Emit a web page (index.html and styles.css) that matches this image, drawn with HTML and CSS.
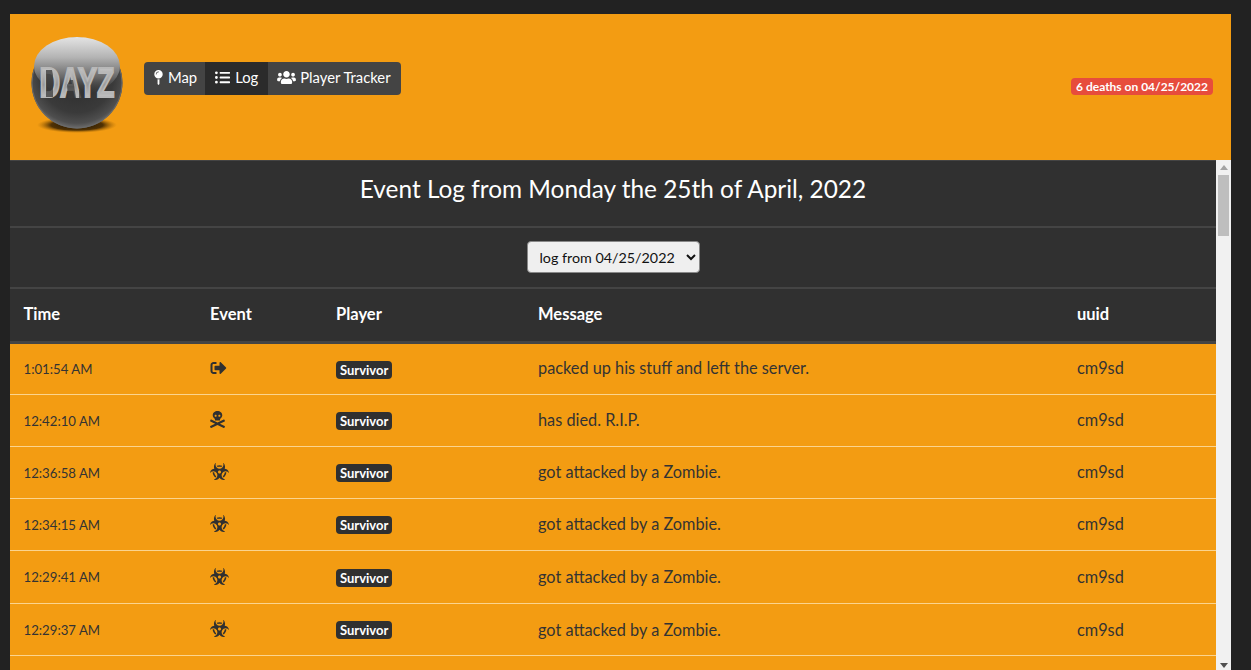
FILE: index.html
```html
<!DOCTYPE html>
<html lang="en">
<head>
<meta charset="utf-8">
<title>DayZ Event Log</title>
<link rel="stylesheet" href="styles.css">
</head>
<body>
<svg class="defs" width="0" height="0" aria-hidden="true">
  <symbol id="i-out" viewBox="0 0 512 512"><path d="M497 273L329 441c-15 15-41 4.500-41-17v-96H152c-13.300 0-24-10.700-24-24v-96c0-13.300 10.700-24 24-24h136V88c0-21.400 25.900-32 41-17l168 168c9.300 9.400 9.300 24.600 0 34zM192 436v-40c0-6.600-5.400-12-12-12H96c-17.700 0-32-14.300-32-32V160c0-17.700 14.300-32 32-32h84c6.600 0 12-5.400 12-12V76c0-6.600-5.400-12-12-12H96c-53 0-96 43-96 96v192c0 53 43 96 96 96h84c6.600 0 12-5.400 12-12z"/></symbol>
  <symbol id="i-skull" viewBox="0 0 448 512"><path d="M439.150 453.060L297.170 384l141.990-69.060c7.900-3.950 11.110-13.560 7.150-21.460L432 264.850c-3.950-7.900-13.560-11.110-21.470-7.160L224 348.410 37.470 257.690c-7.900-3.950-17.510-.75-21.470 7.160L1.690 293.480c-3.950 7.900-.75 17.510 7.150 21.460L150.830 384 8.850 453.060c-7.900 3.950-11.110 13.560-7.150 21.470l14.310 28.630c3.950 7.900 13.560 11.110 21.470 7.150L224 419.590l186.530 90.720c7.900 3.950 17.510.75 21.470-7.150l14.310-28.630c3.950-7.910.74-17.520-7.160-21.470zM150 237.280l-5.480 25.870c-2.670 12.620 5.420 24.850 16.450 24.850h126.080c11.030 0 19.120-12.230 16.450-24.850l-5.500-25.870c41.780-22.410 70-62.750 70-109.280C368 57.310 303.530 0 224 0S80 57.310 80 128c0 46.530 28.220 86.870 70 109.280zM280 112c17.650 0 32 14.350 32 32s-14.350 32-32 32-32-14.350-32-32 14.350-32 32-32zm-112 0c17.650 0 32 14.350 32 32s-14.350 32-32 32-32-14.350-32-32 14.350-32 32-32z"/></symbol>
  <symbol id="i-bio" viewBox="0 0 576 512"><path d="M287.900 112c18.600 0 36.200 3.800 52.800 9.600 13.300-10.300 23.600-24.300 29.500-40.700-25.200-10.900-53-17-82.200-17-29.100 0-56.900 6-82.100 16.900 5.900 16.400 16.200 30.400 29.500 40.700 16.500-5.700 34-9.500 52.500-9.500zM163.600 438.700c12-11.800 20.400-26.400 24.500-42.400-32.900-26.400-54.800-65.300-58.900-109.600-8.500-2.800-17.200-4.600-26.400-4.600-7.600 0-15.200 1-22.500 3.100 4.100 62.800 36.500 117.800 83.300 153.500zm224.200-42.600c4.100 16 12.500 30.700 24.500 42.500 46.800-35.600 79.200-90.600 83.400-153.500-7.300-2-14.900-3.100-22.500-3.100-9.200 0-18 1.900-26.400 4.600-4.200 44.200-26.100 83.100-59 109.500zm113.500-205c-17.600-10.400-36.300-16.600-55.300-19.900 6-17.700 10-36.400 10-56.200 0-41-14.500-80.800-41-112.200-2.500-3-6.600-3.700-10-1.800-3.300 1.900-4.800 6-3.600 9.700 4.500 13.800 6.600 26.300 6.600 38.500 0 67.800-53.800 122.900-120 122.900S168 117 168 49.200c0-12.100 2.200-24.700 6.600-38.500 1.200-3.700-.3-7.800-3.600-9.700-3.400-1.900-7.500-1.200-10 1.800C134.600 34.200 120 74 120 115c0 19.800 3.900 38.500 10 56.200-18.900 3.300-37.700 9.500-55.300 19.900-34.600 20.500-61 53.300-74.300 92.400-1.300 3.700.2 7.700 3.500 9.800 3.300 2 7.500 1.300 10-1.600 9.400-10.800 19-19.100 29.200-25.100 57.300-33.900 130.800-13.700 163.900 45 33.100 58.700 13.400 134-43.900 167.900-10.200 6.100-22 10.400-35.800 13.400-3.700.8-6.400 4.200-6.400 8.100.1 4 2.700 7.300 6.500 8 39.700 7.800 80.600.8 115.200-19.700 18-10.600 32.900-24.500 45.300-40.100 12.400 15.600 27.300 29.500 45.300 40.100 34.600 20.500 75.500 27.500 115.200 19.700 3.800-.7 6.400-4 6.500-8 0-3.900-2.600-7.300-6.400-8.100-13.900-2.900-25.600-7.300-35.800-13.400-57.300-33.900-77-109.200-43.900-167.900s106.600-78.900 163.900-45c10.200 6.100 19.800 14.300 29.200 25.100 2.500 2.900 6.700 3.600 10 1.600s4.800-6.100 3.500-9.800c-13.100-39.100-39.500-72-74.100-92.400zm-213.400 129.300c-26.500 0-48-21.500-48-48s21.500-48 48-48 48 21.500 48 48-21.500 48-48 48z"/></symbol>
</svg>

<header class="topbar">
  <svg class="logo" viewBox="0 0 110 110" role="img" aria-label="DayZ logo">
    <defs>
      <radialGradient id="ball" cx="50%" cy="42%" r="58%">
        <stop offset="0" stop-color="#2a2a2a"/>
        <stop offset=".7" stop-color="#3a3a3a"/>
        <stop offset=".9" stop-color="#4e4e4e"/>
        <stop offset="1" stop-color="#6e6e6e"/>
      </radialGradient>
      <linearGradient id="shine" x1="0" y1="0" x2="0" y2="1">
        <stop offset="0" stop-color="#e4e4e4"/>
        <stop offset=".35" stop-color="#b4b4b4"/>
        <stop offset=".7" stop-color="#666"/>
        <stop offset="1" stop-color="#3a3a3a" stop-opacity="0"/>
      </linearGradient>
      <radialGradient id="drop" cx="50%" cy="50%" r="50%">
        <stop offset="0" stop-color="#1c1000"/>
        <stop offset=".65" stop-color="#3e2602" stop-opacity=".9"/>
        <stop offset="1" stop-color="#a86a08" stop-opacity="0"/>
      </radialGradient>
      <linearGradient id="ink" x1="0" y1="0" x2="0" y2="1">
        <stop offset="0" stop-color="#d8d8d8"/>
        <stop offset=".55" stop-color="#9a9a9a"/>
        <stop offset="1" stop-color="#dedede"/>
      </linearGradient>
    </defs>
    <ellipse cx="55" cy="95" rx="40" ry="8" fill="url(#drop)"/>
    <circle cx="55" cy="53" r="45.500" fill="url(#ball)"/>
    <circle cx="55" cy="53" r="45" fill="none" stroke="#6a6a6a" stroke-width="1"/>
    <ellipse cx="55" cy="36" rx="43" ry="29" fill="url(#shine)"/>
    <text class="logo-text" x="55" y="67" textLength="75" lengthAdjust="spacingAndGlyphs" fill="url(#ink)" stroke="#b8b8b8" stroke-width="2.200">DAYZ</text>
    <path class="logo-figures" d="M24 40h6l1 5v22h-7zM48 50h3l1 5 2 13h-8l-1-13zM57 60h2l1 8h-3z"/>
  </svg>
  <nav class="btn-group">
    <a class="btn">
      <svg class="ico" viewBox="0 0 288 512"><path d="M112 316.940v156.690l22.020 33.020c4.750 7.120 15.220 7.120 19.970 0L176 473.630V316.940c-10.390 1.920-21.060 3.060-32 3.060s-21.610-1.140-32-3.060zM144 0C64.470 0 0 64.470 0 144s64.470 144 144 144 144-64.470 144-144S223.530 0 144 0zm0 76c-37.500 0-68 30.500-68 68 0 6.620-5.380 12-12 12s-12-5.380-12-12c0-50.730 41.280-92 92-92 6.620 0 12 5.380 12 12s-5.380 12-12 12z"/></svg>
      Map
    </a>
    <a class="btn btn-active">
      <svg class="ico" viewBox="0 0 512 512"><path d="M48 48a48 48 0 1 0 48 48 48 48 0 0 0-48-48zm0 160a48 48 0 1 0 48 48 48 48 0 0 0-48-48zm0 160a48 48 0 1 0 48 48 48 48 0 0 0-48-48zm448 16H176a16 16 0 0 0-16 16v32a16 16 0 0 0 16 16h320a16 16 0 0 0 16-16v-32a16 16 0 0 0-16-16zm0-320H176a16 16 0 0 0-16 16v32a16 16 0 0 0 16 16h320a16 16 0 0 0 16-16V80a16 16 0 0 0-16-16zm0 160H176a16 16 0 0 0-16 16v32a16 16 0 0 0 16 16h320a16 16 0 0 0 16-16v-32a16 16 0 0 0-16-16z"/></svg>
      Log
    </a>
    <a class="btn">
      <svg class="ico" viewBox="0 0 640 512"><path d="M96 224c35.300 0 64-28.700 64-64s-28.700-64-64-64-64 28.700-64 64 28.700 64 64 64zm448 0c35.300 0 64-28.700 64-64s-28.700-64-64-64-64 28.700-64 64 28.700 64 64 64zm32 32h-64c-17.600 0-33.500 7.100-45.100 18.600 40.300 22.100 68.900 62 75.100 109.400h66c17.700 0 32-14.300 32-32v-32c0-35.300-28.700-64-64-64zm-256 0c61.900 0 112-50.100 112-112S381.900 32 320 32 208 82.100 208 144s50.100 112 112 112zm76.800 32h-8.300c-20.800 10-43.900 16-68.500 16s-47.600-6-68.500-16h-8.300C179.600 288 128 339.600 128 403.200V432c0 26.500 21.500 48 48 48h288c26.500 0 48-21.500 48-48v-28.800c0-63.600-51.600-115.200-115.200-115.200zm-223.700-13.400C161.500 263.100 145.600 256 128 256H64c-35.300 0-64 28.700-64 64v32c0 17.700 14.300 32 32 32h65.900c6.300-47.400 34.900-87.300 75.200-109.400z"/></svg>
      Player Tracker
    </a>
  </nav>
  <span class="deaths">6 deaths on 04/25/2022</span>
</header>

<div class="scroller">
  <main class="panel">
    <h1 class="title">Event Log from Monday the 25th of April, 2022</h1>
    <div class="picker">
      <select class="log-select">
        <option>log from 04/25/2022</option>
      </select>
    </div>
    <table class="log">
      <colgroup>
        <col class="c-time"><col class="c-event"><col class="c-player"><col class="c-msg"><col class="c-uuid">
      </colgroup>
      <thead>
        <tr><th>Time</th><th>Event</th><th>Player</th><th>Message</th><th>uuid</th></tr>
      </thead>
      <tbody>
        <tr><td class="time">1:01:54 AM</td><td><svg class="ev ev-out"><use href="#i-out"/></svg></td><td><span class="tag">Survivor</span></td><td class="txt">packed up his stuff and left the server.</td><td class="txt">cm9sd</td></tr>
        <tr><td class="time">12:42:10 AM</td><td><svg class="ev ev-skull"><use href="#i-skull"/></svg></td><td><span class="tag">Survivor</span></td><td class="txt">has died. R.I.P.</td><td class="txt">cm9sd</td></tr>
        <tr><td class="time">12:36:58 AM</td><td><svg class="ev ev-bio"><use href="#i-bio"/></svg></td><td><span class="tag">Survivor</span></td><td class="txt">got attacked by a Zombie.</td><td class="txt">cm9sd</td></tr>
        <tr><td class="time">12:34:15 AM</td><td><svg class="ev ev-bio"><use href="#i-bio"/></svg></td><td><span class="tag">Survivor</span></td><td class="txt">got attacked by a Zombie.</td><td class="txt">cm9sd</td></tr>
        <tr class="row-tall"><td class="time">12:29:41 AM</td><td><svg class="ev ev-bio"><use href="#i-bio"/></svg></td><td><span class="tag">Survivor</span></td><td class="txt">got attacked by a Zombie.</td><td class="txt">cm9sd</td></tr>
        <tr><td class="time">12:29:37 AM</td><td><svg class="ev ev-bio"><use href="#i-bio"/></svg></td><td><span class="tag">Survivor</span></td><td class="txt">got attacked by a Zombie.</td><td class="txt">cm9sd</td></tr>
      </tbody>
    </table>
    <div class="more-rows"></div>
  </main>
  <div class="scrollbar" aria-hidden="true">
    <span class="arrow arrow-up"></span>
    <span class="thumb"></span>
    <span class="arrow arrow-down"></span>
  </div>
</div>
</body>
</html>
```

FILE: styles.css
```css
* { box-sizing: border-box; }

html, body { height: 100%; }

body {
  margin: 0;
  padding: 14px 20px 0 10px;
  display: flex;
  flex-direction: column;
  overflow: hidden;
  background: #222;
  color: #fff;
  font-family: Lato, "Liberation Sans", sans-serif;
  font-size: 15px;
  line-height: 1.5;
}

.defs { position: absolute; }

.topbar {
  flex: none;
  height: 146px;
  display: flex;
  align-items: flex-start;
  padding: 16px 18px 0 12px;
  background: #f39c12;
}

.logo { flex: none; width: 110px; height: 110px; margin-right: 12px; overflow: visible; }

.logo-text {
  font-family: "Liberation Sans", sans-serif;
  font-size: 42px;
  font-weight: 700;
  text-anchor: middle;
}

.logo-figures { fill: #3a3a3a; opacity: .75; }

.btn-group {
  display: flex;
  margin-top: 32px;
  height: 33px;
  border-radius: 4px;
  overflow: hidden;
  background: #444;
}

.btn {
  display: flex;
  align-items: center;
  gap: 5px;
  padding: 0 10px 2px;
  color: #fff;
  font-size: 14.8px;
}

.btn:nth-child(1) { padding-right: 8px; }
.btn:nth-child(3) { padding-left: 9px; gap: 4px; }

.btn-active { background: #2b2b2b; }

.ico { height: 15px; fill: #fff; flex: none; }
.btn:nth-child(1) .ico { width: 9px; }
.btn:nth-child(2) .ico { width: 15px; }
.btn:nth-child(3) .ico { width: 19px; }

.deaths {
  margin: 48px 0 0 auto;
  height: 17px;
  padding: 0 5px;
  border-radius: 4px;
  background: #e74c3c;
  color: #fff;
  font-size: 12px;
  font-weight: 700;
  line-height: 17px;
  white-space: nowrap;
}

.scroller {
  flex: 1;
  min-height: 0;
  display: flex;
}

.panel {
  flex: 1;
  min-width: 0;
  overflow: hidden;
  background: #303030;
  border-top: 1px solid #444;
}

.scrollbar {
  flex: none;
  width: 15px;
  display: flex;
  flex-direction: column;
  align-items: center;
  padding-top: 5px;
  background: #f1f1f1;
}

.arrow { width: 0; height: 0; border-left: 4px solid transparent; border-right: 4px solid transparent; }
.arrow-up { border-bottom: 5px solid #a3a3a3; }
.arrow-down { margin-top: auto; margin-bottom: 2px; border-top: 5px solid #505050; }

.thumb {
  width: 11px;
  height: 61px;
  margin-top: 5px;
  background: #bebebe;
}

.title {
  margin: 0;
  height: 67px;
  border-bottom: 2px solid #444;
  font-size: 24.4px;
  font-weight: 400;
  line-height: 56px;
  text-align: center;
}

.picker {
  height: 61px;
  display: flex;
  justify-content: center;
  align-items: center;
  padding-bottom: 1px;
  border-bottom: 2px solid #444;
}

.log-select {
  width: 173px;
  height: 32px;
  padding: 0 4px 0 8px;
  border: 1px solid #888;
  border-radius: 4px;
  background: #efefef;
  color: #111;
  font-family: Lato, "Liberation Sans", sans-serif;
  font-size: 14.3px;
}

.log {
  width: 100%;
  table-layout: fixed;
  border-collapse: collapse;
}

.c-time { width: 186.5px; }
.c-event { width: 126px; }
.c-player { width: 202px; }
.c-msg { width: 539px; }
.c-uuid { width: auto; }

.log th {
  height: 53px;
  padding: 0 13.5px;
  border-bottom: 3px solid #444;
  font-size: 16.5px;
  font-weight: 700;
  text-align: left;
}

.log td {
  height: 52px;
  padding: 0 13.5px 1px;
  border-top: 1px solid #fbd48e;
  background: #f39c12;
  color: #333;
  font-size: 16.3px;
}

.log .row-tall td { height: 53px; }

.log tbody tr:first-child td { border-top: 0; }

.log td.txt { padding-top: 1px; padding-bottom: 0; }
.log td.time { padding-top: 3px; padding-bottom: 0; font-size: 13.2px; }
.log tbody tr:first-child td.txt { padding-top: 0; padding-bottom: 1px; }
.log tbody tr:first-child td.time { padding-top: 2px; }

.ev { display: block; fill: #303030; }
.ev-out { width: 17px; height: 16px; }
.ev-skull { width: 15px; height: 17px; }
.ev-bio { width: 19px; height: 17px; }

.tag {
  display: inline-block;
  height: 18px;
  padding: 0 4px;
  border-radius: 4px;
  background: #303030;
  color: #fff;
  font-size: 13px;
  font-weight: 700;
  line-height: 18px;
  vertical-align: middle;
}

.more-rows { height: 20px; border-top: 1px solid #fbd48e; background: #f39c12; }
```
